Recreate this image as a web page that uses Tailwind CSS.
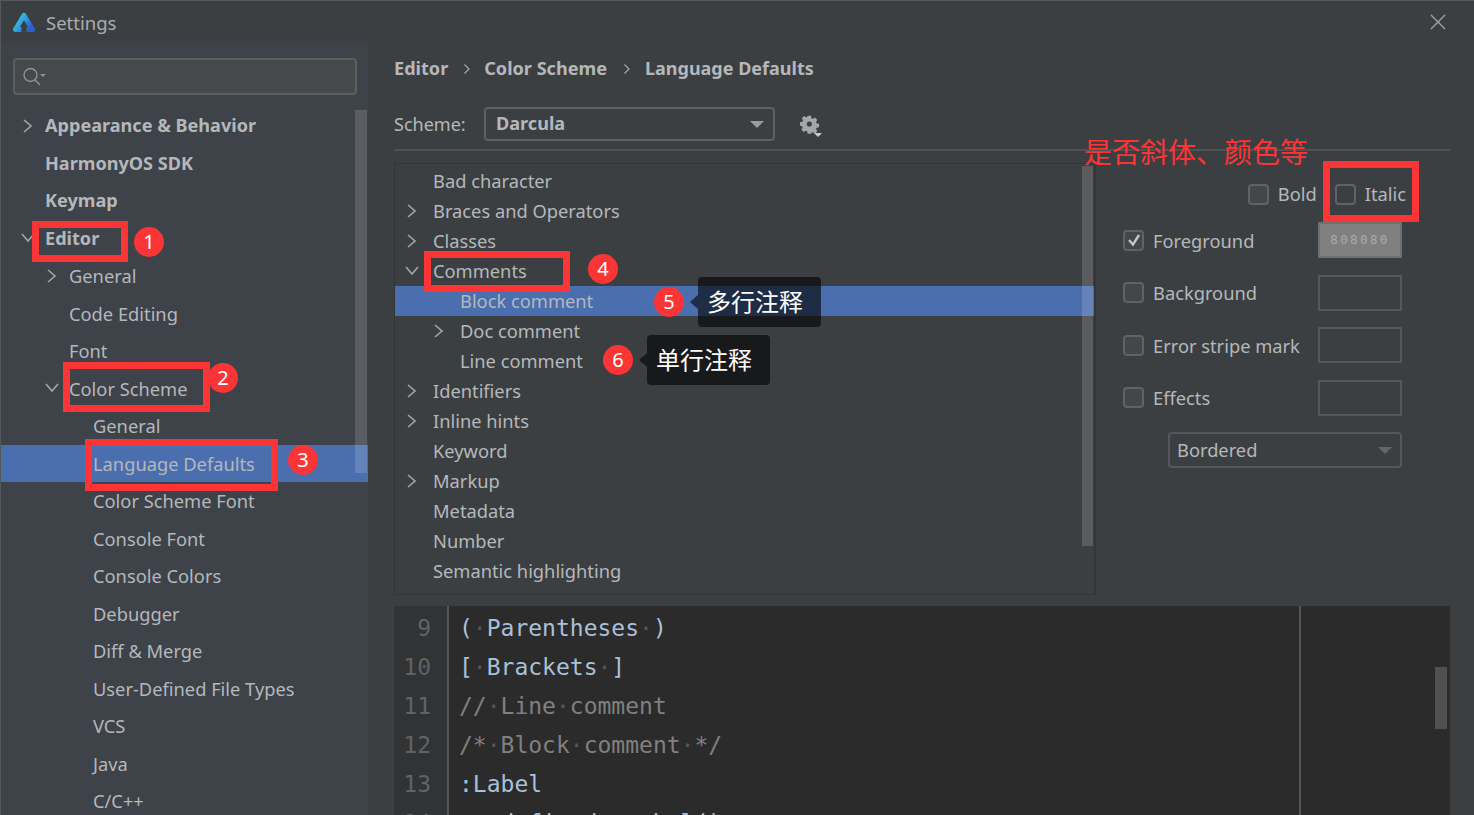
<!DOCTYPE html>
<html lang="en">
<head>
  <meta charset="UTF-8">
  <title>Settings</title>
  <script src="https://cdn.jsdelivr.net/npm/@tailwindcss/browser@4"></script>
</head>
<body class="bg-[#3c3f41] overflow-hidden">
  <div class="relative w-[1474px] h-[815px] overflow-hidden flex flex-col font-['Noto_Sans','Noto_Sans_CJK_SC',sans-serif] text-[18.3px] text-[#b4b8bb] border-l border-t border-[#55585a]">

    <!-- title bar -->
    <header class="h-[42px] shrink-0 flex items-center bg-[#3c3f41]">
      <svg class="ml-[10px]" width="26" height="24" viewBox="0 0 26 24" fill="none">
        <defs>
          <linearGradient id="logo" x1="0" y1="0" x2="1" y2="0.6">
            <stop offset="0" stop-color="#3fd0e0"/>
            <stop offset="0.55" stop-color="#2f9be0"/>
            <stop offset="1" stop-color="#2a5fd0"/>
          </linearGradient>
        </defs>
        <path d="M10.5 19.5 H4.5 L13 5.5 L21.5 19.5 H15.5" stroke="url(#logo)" stroke-width="5" stroke-linejoin="round"/>
      </svg>
      <span class="ml-[9px] pt-[1px] text-[#a9adb0] text-[18.5px]">Settings</span>
      <svg class="ml-auto mr-[28px]" width="16" height="16" viewBox="0 0 16 16" fill="none" stroke="#a0a3a5" stroke-width="1.4">
        <path d="M1 1 L15 15 M15 1 L1 15"/>
      </svg>
    </header>

    <div class="flex flex-1 min-h-0">
      <!-- sidebar -->
      <aside class="relative w-[367px] shrink-0 bg-[#3e4249] overflow-hidden">
        <div class="ml-[12px] mr-[11px] mt-[15px] h-[37px] bg-[#45494a] border-2 border-[#5b5e60] rounded-[4px] flex items-center pl-[7px]">
          <svg width="24" height="22" viewBox="0 0 24 22" fill="none" stroke="#8f9294" stroke-width="1.4">
            <circle cx="8.5" cy="9" r="6.5"/>
            <path d="M13 14 L18 19"/>
            <path d="M18 8 H24 L21 11 Z" fill="#8f9294" stroke="none"/>
          </svg>
        </div>
        <nav class="mt-[12px]">
          <div class="h-[37.5px] flex items-center font-bold text-[18.1px] pl-[44px] relative">
            <svg class="absolute left-[21px] top-[11px]" width="12" height="16" viewBox="0 0 12 16" fill="none" stroke="#a4a7a9" stroke-width="1.6"><path d="M2 2 L9 8 L2 14"/></svg>
            Appearance &amp; Behavior
          </div>
          <div class="h-[37.5px] flex items-center font-bold text-[18.1px] pl-[44px]">HarmonyOS SDK</div>
          <div class="h-[37.5px] flex items-center font-bold text-[18.1px] pl-[44px]">Keymap</div>
          <div class="h-[37.5px] flex items-center font-bold text-[18.1px] pl-[44px] relative">
            <svg class="absolute left-[19px] top-[12px]" width="16" height="12" viewBox="0 0 16 12" fill="none" stroke="#a4a7a9" stroke-width="1.6"><path d="M2 2 L8 9 L14 2"/></svg>
            Editor
          </div>
          <div class="h-[37.5px] flex items-center pl-[68px] relative">
            <svg class="absolute left-[45px] top-[11px]" width="12" height="16" viewBox="0 0 12 16" fill="none" stroke="#a4a7a9" stroke-width="1.6"><path d="M2 2 L9 8 L2 14"/></svg>
            General
          </div>
          <div class="h-[37.5px] flex items-center pl-[68px]">Code Editing</div>
          <div class="h-[37.5px] flex items-center pl-[68px]">Font</div>
          <div class="h-[37.5px] flex items-center pl-[68px] relative">
            <svg class="absolute left-[43px] top-[12px]" width="16" height="12" viewBox="0 0 16 12" fill="none" stroke="#a4a7a9" stroke-width="1.6"><path d="M2 2 L8 9 L14 2"/></svg>
            Color Scheme
          </div>
          <div class="h-[37.5px] flex items-center pl-[92px]">General</div>
          <div class="h-[37.5px] flex items-center pl-[92px] bg-[#4b6eaf]">Language Defaults</div>
          <div class="h-[37.5px] flex items-center pl-[92px]">Color Scheme Font</div>
          <div class="h-[37.5px] flex items-center pl-[92px]">Console Font</div>
          <div class="h-[37.5px] flex items-center pl-[92px]">Console Colors</div>
          <div class="h-[37.5px] flex items-center pl-[92px]">Debugger</div>
          <div class="h-[37.5px] flex items-center pl-[92px]">Diff &amp; Merge</div>
          <div class="h-[37.5px] flex items-center pl-[92px]">User-Defined File Types</div>
          <div class="h-[37.5px] flex items-center pl-[92px]">VCS</div>
          <div class="h-[37.5px] flex items-center pl-[92px]">Java</div>
          <div class="h-[37.5px] flex items-center pl-[92px]">C/C++</div>
        </nav>
        <div class="absolute left-[354px] top-[67px] w-[12px] h-[363px] bg-white/15"></div>
      </aside>

      <!-- main -->
      <main class="flex-1 min-w-0 pl-[26px] pr-[24px] flex flex-col">
        <div class="h-[50px] flex items-center font-bold text-[18.1px] pt-[1px]">
          <span>Editor</span>
          <svg class="ml-[15px] mr-[13px]" width="8" height="12" viewBox="0 0 8 12" fill="none" stroke="#a4a7a9" stroke-width="1.2"><path d="M1.5 1.5 L6 6 L1.5 10.5"/></svg>
          <span>Color Scheme</span>
          <svg class="ml-[16px] mr-[14px]" width="8" height="12" viewBox="0 0 8 12" fill="none" stroke="#a4a7a9" stroke-width="1.2"><path d="M1.5 1.5 L6 6 L1.5 10.5"/></svg>
          <span class="text-[18px]">Language Defaults</span>
        </div>
        <div class="mt-[14px] h-[34px] flex items-center">
          <span class="w-[90px] text-[18px]">Scheme:</span>
          <div class="w-[291px] h-[34px] border-2 border-[#5e6163] rounded-[4px] flex items-center pl-[10px] pr-[9px] font-bold text-[18.1px]">
            Darcula
            <div class="ml-auto w-0 h-0 border-l-[7px] border-r-[7px] border-t-[7px] border-l-transparent border-r-transparent border-t-[#9a9da0]"></div>
          </div>
          <svg class="ml-[24px] mt-[5px]" width="24" height="24" viewBox="0 0 24 24">
            <path fill="#a4a7a9" fill-rule="evenodd" d="M9 1h4l.5 2.8 1.7.8 2.4-1.6 2.8 2.8-1.6 2.4.8 1.7 2.8.5v4l-2.8.5-.8 1.7 1.6 2.4-2.8 2.8-2.4-1.6-1.7.8L13 22H9l-.5-2.8-1.7-.8-2.4 1.6-2.8-2.8 1.6-2.4-.8-1.7L0 12.5v-4l2.8-.5.8-1.7L2 3.9 4.8 1.1 7.2 2.7l1.3-.4Z M11 7.5a3 3 0 1 0 0 6 3 3 0 0 0 0-6Z" transform="translate(1 0) scale(.85)"/>
            <path fill="#c8cacc" d="M15 18h8l-4 4Z"/>
          </svg>
        </div>
        <div class="mt-[8px] h-[2px] bg-[#4f5254]"></div>

        <div class="mt-[12px] flex h-[432px]">
          <!-- tree -->
          <div class="relative w-[702px] shrink-0 border border-r-2 border-[#333537] overflow-hidden pt-[2px]">
            <div class="h-[30px] flex items-center pl-[38px]">Bad character</div>
            <div class="h-[30px] flex items-center pl-[38px] relative">
              <svg class="absolute left-[11px] top-[7px]" width="12" height="16" viewBox="0 0 12 16" fill="none" stroke="#a4a7a9" stroke-width="1.6"><path d="M2 2 L9 8 L2 14"/></svg>
              Braces and Operators
            </div>
            <div class="h-[30px] flex items-center pl-[38px] relative">
              <svg class="absolute left-[11px] top-[7px]" width="12" height="16" viewBox="0 0 12 16" fill="none" stroke="#a4a7a9" stroke-width="1.6"><path d="M2 2 L9 8 L2 14"/></svg>
              Classes
            </div>
            <div class="h-[30px] flex items-center pl-[38px] relative">
              <svg class="absolute left-[9px] top-[9px]" width="16" height="12" viewBox="0 0 16 12" fill="none" stroke="#a4a7a9" stroke-width="1.6"><path d="M2 2 L8 9 L14 2"/></svg>
              Comments
            </div>
            <div class="h-[30px] flex items-center pl-[65px] bg-[#4b6eaf]">Block comment</div>
            <div class="h-[30px] flex items-center pl-[65px] relative">
              <svg class="absolute left-[38px] top-[7px]" width="12" height="16" viewBox="0 0 12 16" fill="none" stroke="#a4a7a9" stroke-width="1.6"><path d="M2 2 L9 8 L2 14"/></svg>
              Doc comment
            </div>
            <div class="h-[30px] flex items-center pl-[65px]">Line comment</div>
            <div class="h-[30px] flex items-center pl-[38px] relative">
              <svg class="absolute left-[11px] top-[7px]" width="12" height="16" viewBox="0 0 12 16" fill="none" stroke="#a4a7a9" stroke-width="1.6"><path d="M2 2 L9 8 L2 14"/></svg>
              Identifiers
            </div>
            <div class="h-[30px] flex items-center pl-[38px] relative">
              <svg class="absolute left-[11px] top-[7px]" width="12" height="16" viewBox="0 0 12 16" fill="none" stroke="#a4a7a9" stroke-width="1.6"><path d="M2 2 L9 8 L2 14"/></svg>
              Inline hints
            </div>
            <div class="h-[30px] flex items-center pl-[38px]">Keyword</div>
            <div class="h-[30px] flex items-center pl-[38px] relative">
              <svg class="absolute left-[11px] top-[7px]" width="12" height="16" viewBox="0 0 12 16" fill="none" stroke="#a4a7a9" stroke-width="1.6"><path d="M2 2 L9 8 L2 14"/></svg>
              Markup
            </div>
            <div class="h-[30px] flex items-center pl-[38px]">Metadata</div>
            <div class="h-[30px] flex items-center pl-[38px]">Number</div>
            <div class="h-[30px] flex items-center pl-[38px]">Semantic highlighting</div>
            <div class="absolute left-[687px] top-[2px] w-[11px] h-[380px] bg-white/15"></div>
          </div>

          <!-- attributes -->
          <div class="flex-1 min-w-0">
            <div class="h-[51px] flex items-center justify-end pr-[44px] pt-[11px]">
              <span class="w-[21px] h-[21px] shrink-0 border-2 border-[#606365] rounded-[4px] bg-[#43474a] mr-[9px]"></span>
              <span>Bold</span>
              <span class="w-[21px] h-[21px] shrink-0 border-2 border-[#606365] rounded-[4px] ml-[18px] mr-[9px]"></span>
              <span>Italic</span>
            </div>
            <div class="h-[52.5px] flex items-center pl-[27px]">
              <span class="w-[21px] h-[21px] border-2 border-[#606365] rounded-[4px] bg-[#43474a] flex items-center justify-center">
                <svg width="14" height="14" viewBox="0 0 14 14" fill="none" stroke="#c4c7c9" stroke-width="2.4"><path d="M2 7 L6 11.5 L12 2"/></svg>
              </span>
              <span class="ml-[9px]">Foreground</span>
              <span class="ml-auto mr-[48px] w-[84px] h-[36px] bg-[#808080] border-2 border-[#6d6f70] flex items-center justify-center font-['DejaVu_Sans_Mono',monospace] text-[12.5px] tracking-[2.4px] text-[#ababab]">808080</span>
            </div>
            <div class="h-[52.5px] flex items-center pl-[27px]">
              <span class="w-[21px] h-[21px] border-2 border-[#606365] rounded-[4px] bg-[#43474a]"></span>
              <span class="ml-[9px]">Background</span>
              <span class="ml-auto mr-[48px] w-[84px] h-[36px] border-2 border-[#55585a]"></span>
            </div>
            <div class="h-[52.5px] flex items-center pl-[27px]">
              <span class="w-[21px] h-[21px] border-2 border-[#606365] rounded-[4px] bg-[#43474a]"></span>
              <span class="ml-[9px]">Error stripe mark</span>
              <span class="ml-auto mr-[48px] w-[84px] h-[36px] border-2 border-[#55585a]"></span>
            </div>
            <div class="h-[52.5px] flex items-center pl-[27px]">
              <span class="w-[21px] h-[21px] border-2 border-[#606365] rounded-[4px] bg-[#43474a]"></span>
              <span class="ml-[9px]">Effects</span>
              <span class="ml-auto mr-[48px] w-[84px] h-[36px] border-2 border-[#55585a]"></span>
            </div>
            <div class="ml-[72px] mt-[8px] w-[234px] h-[36px] border-2 border-[#55585a] rounded-[4px] flex items-center pl-[7px] pr-[8px]">
              Bordered
              <div class="ml-auto w-0 h-0 border-l-[7px] border-r-[7px] border-t-[7px] border-l-transparent border-r-transparent border-t-[#636567]"></div>
            </div>
          </div>
        </div>

        <!-- preview editor -->
        <div class="relative mt-[11px] flex-1 min-h-0 bg-[#2b2b2b] flex overflow-hidden font-['DejaVu_Sans_Mono',monospace] text-[23px] pt-[3px]">
          <div class="w-[55px] -mt-[3px] pt-[3px] shrink-0 bg-[#313335] border-r-2 border-[#555555] text-[#606366]">
            <div class="h-[39px] flex items-center justify-end pr-[16px]">9</div>
            <div class="h-[39px] flex items-center justify-end pr-[16px]">10</div>
            <div class="h-[39px] flex items-center justify-end pr-[16px]">11</div>
            <div class="h-[39px] flex items-center justify-end pr-[16px]">12</div>
            <div class="h-[39px] flex items-center justify-end pr-[16px]">13</div>
            <div class="h-[39px] flex items-center justify-end pr-[16px]">14</div>
          </div>
          <div class="pl-[10px]">
            <div class="h-[39px] leading-[39px] text-[#a9c0d8]">(<span class="text-[#555759]">·</span>Parentheses<span class="text-[#555759]">·</span>)</div>
            <div class="h-[39px] leading-[39px] text-[#a9c0d8]">[<span class="text-[#555759]">·</span>Brackets<span class="text-[#555759]">·</span>]</div>
            <div class="h-[39px] leading-[39px] text-[#808080]">//<span class="text-[#555759]">·</span>Line<span class="text-[#555759]">·</span>comment</div>
            <div class="h-[39px] leading-[39px] text-[#808080]">/*<span class="text-[#555759]">·</span>Block<span class="text-[#555759]">·</span>comment<span class="text-[#555759]">·</span>*/</div>
            <div class="h-[39px] leading-[39px] text-[#a9c0d8]">:Label</div>
            <div class="h-[39px] leading-[39px] text-[#a9c0d8]">predefined_symbol()</div>
          </div>
          <div class="absolute left-[905px] top-0 bottom-0 w-[2px] bg-[#555555]"></div>
          <div class="absolute right-[3px] top-[61px] w-[12px] h-[62px] bg-[#505050]"></div>
        </div>
      </main>
    </div>

    <!-- annotations -->
    <div class="absolute left-[31px] top-[220px] w-[96px] h-[41px] border-[7px] border-[#fb3535]"></div>
    <div class="absolute left-[62px] top-[361px] w-[147px] h-[50px] border-[7px] border-[#fb3535]"></div>
    <div class="absolute left-[84px] top-[438px] w-[193px] h-[52px] border-[7px] border-[#fb3535]"></div>
    <div class="absolute left-[423px] top-[250px] w-[146px] h-[41px] border-[7px] border-[#fb3535]"></div>
    <div class="absolute left-[1322px] top-[160px] w-[96px] h-[61px] border-[7px] border-[#fb3535]"></div>

    <div class="absolute left-[133px] top-[226px] w-[30px] h-[30px] rounded-full bg-[#fb3535] text-white flex items-center justify-center text-[20px]">1</div>
    <div class="absolute left-[207px] top-[362px] w-[30px] h-[30px] rounded-full bg-[#fb3535] text-white flex items-center justify-center text-[20px]">2</div>
    <div class="absolute left-[287px] top-[444px] w-[30px] h-[30px] rounded-full bg-[#fb3535] text-white flex items-center justify-center text-[20px]">3</div>
    <div class="absolute left-[587px] top-[253px] w-[30px] h-[30px] rounded-full bg-[#fb3535] text-white flex items-center justify-center text-[20px]">4</div>
    <div class="absolute left-[653px] top-[286px] w-[30px] h-[30px] rounded-full bg-[#fb3535] text-white flex items-center justify-center text-[20px]">5</div>
    <div class="absolute left-[602px] top-[344px] w-[30px] h-[30px] rounded-full bg-[#fb3535] text-white flex items-center justify-center text-[20px]">6</div>

    <div class="absolute left-[697px] top-[276px] w-[123px] h-[50px] rounded-[4px] bg-black/60 text-white flex items-center pl-[9px] text-[24px]">多行注释</div>
    <div class="absolute left-[689px] top-[294px] w-0 h-0 border-t-[7px] border-b-[7px] border-r-[8px] border-t-transparent border-b-transparent border-r-[#1e2c46]"></div>
    <div class="absolute left-[646px] top-[334px] w-[123px] h-[50px] rounded-[4px] bg-black/60 text-white flex items-center pl-[9px] text-[24px]">单行注释</div>
    <div class="absolute left-[638px] top-[352px] w-0 h-0 border-t-[7px] border-b-[7px] border-r-[8px] border-t-transparent border-b-transparent border-r-[#1a1b1d]"></div>
    <div class="absolute left-[1083px] top-[133px] text-[#fb3535] text-[28px] leading-[36px]">是否斜体、颜色等</div>
  </div>
</body>
</html>
